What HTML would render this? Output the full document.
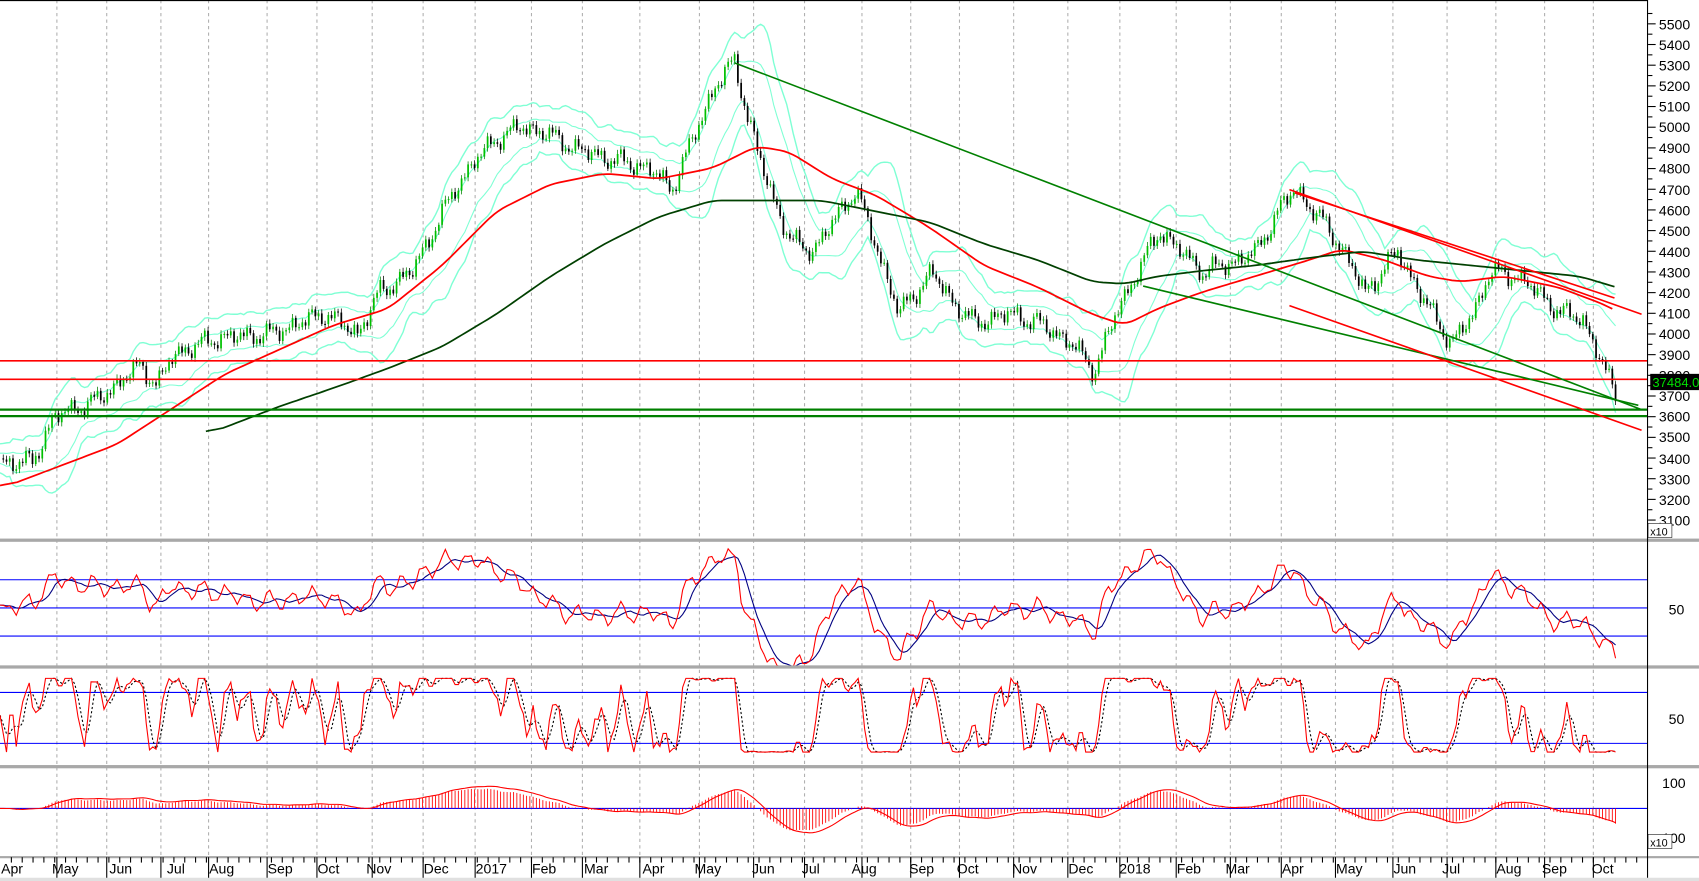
<!DOCTYPE html>
<html><head><meta charset="utf-8"><style>
html,body{margin:0;padding:0;background:#fff;overflow:hidden}
svg{display:block}
text{font-family:"Liberation Sans",Arial,sans-serif;font-size:13px;fill:#000}
</style></head><body>
<svg id="s" width="1699" height="881" viewBox="0 0 1568 813" preserveAspectRatio="none" xmlns="http://www.w3.org/2000/svg">
<rect width="1568" height="813" fill="#fff"/>
<g id="grid"></g>
<g id="plot"></g>
<rect x="0" y="497" width="1568" height="3" fill="#a8a8a8"/>
<rect x="0" y="614" width="1568" height="3" fill="#a8a8a8"/>
<rect x="0" y="706" width="1568" height="3" fill="#a8a8a8"/>
<rect x="0" y="790" width="1568" height="2" fill="#a8a8a8"/>
<rect x="0" y="810" width="1568" height="3" fill="#e0e0e0"/>
<line x1="1520.5" y1="0" x2="1520.5" y2="810" stroke="#000" stroke-width="1"/>
<line x1="0" y1="0.5" x2="1520" y2="0.5" stroke="#000"/>
<g id="ticks" stroke="#000"></g>
<g>
<text x="1531" y="27">5500</text><text x="1531" y="46">5400</text><text x="1531" y="65">5300</text><text x="1531" y="84">5200</text><text x="1531" y="103">5100</text><text x="1531" y="122">5000</text><text x="1531" y="141">4900</text><text x="1531" y="160">4800</text><text x="1531" y="180">4700</text><text x="1531" y="199">4600</text><text x="1531" y="218">4500</text><text x="1531" y="237">4400</text><text x="1531" y="256">4300</text><text x="1531" y="275">4200</text><text x="1531" y="294">4100</text><text x="1531" y="313">4000</text><text x="1531" y="332">3900</text><text x="1531" y="351">3800</text><text x="1531" y="370">3700</text><text x="1531" y="389">3600</text><text x="1531" y="408">3500</text><text x="1531" y="428">3400</text><text x="1531" y="447">3300</text><text x="1531" y="466">3200</text><text x="1531" y="485">3100</text>
<rect x="1523" y="345" width="45" height="15" fill="#000"/>
<text x="1525" y="357" style="fill:#00e000;font-size:12px">37484.0</text>
<rect x="1521" y="483" width="22" height="13" fill="#fff" stroke="#000" stroke-width="0.5"/>
<text x="1523" y="494" style="font-size:10px">x10</text>
<text x="1540" y="567">50</text>
<text x="1540" y="668">50</text>
<text x="1534" y="727">100</text>
<text x="1534" y="778">100</text>
<rect x="1521" y="770" width="22" height="13" fill="#fff" stroke="#000" stroke-width="0.5"/>
<text x="1523" y="781" style="font-size:10px">x10</text>
</g>
<g id="months"></g>
</svg>
<script>
var NS="http://www.w3.org/2000/svg";
function el(p,t,a){var e=document.createElementNS(NS,t);for(var k in a)e.setAttribute(k,a[k]);p.appendChild(e);return e;}
var grid=document.getElementById('grid'),plot=document.getElementById('plot'),ticks=document.getElementById('ticks');
var mx=[52,98,148,192,246,292,343,390,438,490,537,590,645,695,742,795,840,885,935,985,1033,1085,1135,1182,1232,1285,1335,1380,1425,1470];
mx.forEach(function(x){el(grid,'line',{x1:x+.5,y1:0,x2:x+.5,y2:790,stroke:'#b0b0b0','stroke-dasharray':'3,3'});});
for(var p=3100;p<=5550;p+=50){var y=22+(5500-p)*0.1908;el(ticks,'line',{x1:1521,y1:y,x2:p%100?1525:1528,y2:y});}
var ml=[[0,'Apr'],[47,'May'],[100,'Jun'],[153,'Jul'],[192,'Aug'],[246,'Sep'],[292,'Oct'],[337,'Nov'],[390,'Dec'],[438,'2017'],[490,'Feb'],[538,'Mar'],[592,'Apr'],[640,'May'],[693,'Jun'],[739,'Jul'],[785,'Aug'],[838,'Sep'],[882,'Oct'],[933,'Nov'],[985,'Dec'],[1032,'2018'],[1085,'Feb'],[1130,'Mar'],[1182,'Apr'],[1232,'May'],[1285,'Jun'],[1330,'Jul'],[1380,'Aug'],[1422,'Sep'],[1468,'Oct']];
var M=document.getElementById('months');
ml.forEach(function(m){var t=el(M,'text',{x:m[0]+1,y:806});t.textContent=m[1];});
mx.forEach(function(x){el(M,'line',{x1:x+.5,y1:791,x2:x+.5,y2:810,stroke:'#000'});});
for(var x=10;x<1520;x+=10)el(M,'line',{x1:x+.5,y1:791,x2:x+.5,y2:796,stroke:'#000'});
var K=[[0,3380],[30,3380],[50,3600],[90,3680],[130,3850],[145,3750],[160,3900],[200,3980],[250,4000],[300,4100],[330,4000],[350,4200],[380,4300],[400,4500],[420,4700],[440,4850],[460,4950],[480,5000],[500,4980],[530,4900],[560,4850],[600,4800],[620,4700],[640,4950],[660,5200],[678,5320],[690,5050],[710,4700],[730,4450],[750,4400],[770,4550],[790,4700],[810,4400],[830,4100],[860,4300],[880,4150],[900,4050],[930,4100],[960,4050],[990,3950],[1010,3820],[1030,4100],[1050,4300],[1070,4500],[1090,4400],[1110,4300],[1140,4350],[1160,4400],[1180,4600],[1195,4700],[1220,4550],[1240,4400],[1260,4200],[1290,4400],[1310,4200],[1340,3950],[1360,4100],[1375,4300],[1400,4280],[1420,4200],[1440,4100],[1460,4080],[1475,3900],[1485,3780],[1492,3700]];
function interpK(K,x){for(var i=1;i<K.length;i++)if(x<=K[i][0]){var a=K[i-1],b=K[i];return a[1]+(b[1]-a[1])*(x-a[0])/(b[0]-a[0]);}return K[K.length-1][1];}
var X=[],P=[];for(var x=0;x<=1492;x+=3){X.push(x);P.push(interpK(K,x)+30*Math.sin(x*0.31)+22*Math.sin(x*0.77+1)+14*Math.sin(x*1.9));}
function Y(p){return 22+(5500-p)*0.1908;}
function sma(a,n){return a.map(function(v,i){var s=0,c=0;for(var j=Math.max(0,i-n+1);j<=i;j++){s+=a[j];c++;}return s/c;});}
function sd(a,m,n){return a.map(function(v,i){var s=0,c=0;for(var j=Math.max(0,i-n+1);j<=i;j++){s+=(a[j]-m[i])*(a[j]-m[i]);c++;}return Math.sqrt(s/c);});}
function ema(a,n){var k=2/(n+1),o=[],e=a[0];a.forEach(function(v){e=v*k+e*(1-k);o.push(e);});return o;}
function line(xs,ys,col,w,extra,start){var d='';for(var i=start||0;i<xs.length;i++)d+=(d?'L':'M')+xs[i].toFixed(1)+','+ys[i].toFixed(1);var a={d:d,fill:'none',stroke:col,'stroke-width':w};for(var k in extra)a[k]=extra[k];return el(plot,'path',a);}
var m20=sma(P,12),s20=sd(P,m20,12);
line(X,m20.map(function(v,i){return Y(v+1.8*s20[i]+70);}),'#7fffd4',1.3);
line(X,m20.map(function(v,i){return Y(v-1.8*s20[i]-70);}),'#7fffd4',1.3);
line(X,m20.map(function(v,i){return Y(v+0.9*s20[i]+25);}),'#7fffd4',1);
line(X,m20.map(function(v,i){return Y(v-0.9*s20[i]-25);}),'#7fffd4',1);
for(var i=1;i<P.length;i++){var o=P[i-1],c=P[i],up=c>o;var hi=Math.max(o,c)+10+10*Math.abs(Math.sin(i)),lo=Math.min(o,c)-10-10*Math.abs(Math.cos(i));
el(plot,'line',{x1:X[i],y1:Y(hi),x2:X[i],y2:Y(lo),stroke:up?'#008000':'#000','stroke-width':0.7});
el(plot,'rect',{x:X[i]-0.8,y:Y(Math.max(o,c)),width:1.6,height:Math.max(1,Math.abs(Y(o)-Y(c))),fill:up?'#00c000':'#000'});}
var RK=[[0,448],[100,410],[200,345],[300,300],[350,285],[400,245],[450,195],[500,170],[550,160],[600,165],[650,155],[690,135],[720,140],[760,165],[800,180],[850,210],[900,245],[950,265],[1000,290],[1030,300],[1060,285],[1100,270],[1150,255],[1200,240],[1230,230],[1270,240],[1310,255],[1340,260],[1380,255],[1430,265],[1470,280],[1490,290]];
var GK=[[190,398],[250,375],[300,358],[350,340],[400,320],[450,290],[500,255],[550,225],[600,200],[650,185],[700,185],[750,185],[800,195],[850,205],[900,225],[950,240],[1000,260],[1030,262],[1060,255],[1100,250],[1150,245],[1200,238],[1250,232],[1300,240],[1350,245],[1400,250],[1450,255],[1490,267]];
function kpath(Kk,col){var xs=[],ys=[];for(var x=Kk[0][0];x<=Kk[Kk.length-1][0];x+=4){xs.push(x);ys.push(interpK(Kk,x));}ys=sma(ys,5);line(xs,ys,col,1.6);}
kpath(RK,'#ff0000');kpath(GK,'#004000');
function L(x1,y1,x2,y2,c,w){el(plot,'line',{x1:x1,y1:y1,x2:x2,y2:y2,stroke:c,'stroke-width':w||1.5});}
L(0,333,1520,333,'#ff0000');L(0,350,1520,350,'#ff0000');
L(0,378,1520,378,'#008000',2);L(0,384,1520,384,'#008000',2);
L(678,58,1515,378,'#008000');L(1055,264,1512,374,'#008000');
L(1190,282,1515,397,'#ff0000');L(1190,175,1515,290,'#ff0000');L(1195,178,1490,275,'#ff0000');
// RSI
var m40=sma(P,25);
var rsi=P.map(function(v,i){return Math.max(8,Math.min(92,52+(v-m40[i])*0.09+(P[i]-(P[i-2]||v))*0.08));});
rsi=sma(rsi,2);var rs=sma(rsi,6);
L(0,535,1520,535,'#0000ff',1);L(0,561,1520,561,'#0000ff',1);L(0,587,1520,587,'#0000ff',1);
line(X,rs.map(function(v){return 561-(v-50)*1.3;}),'#000080',1);
line(X,rsi.map(function(v){return 561-(v-50)*1.3;}),'#ff0000',1);
// Stoch
var st=P.map(function(v,i){var mn=1e9,mxv=-1e9;for(var j=Math.max(0,i-6);j<=i;j++){mn=Math.min(mn,P[j]);mxv=Math.max(mxv,P[j]);}return mxv>mn?(v-mn)/(mxv-mn)*100:50;});
st=sma(st,2);var sts=sma(st,3);
L(0,639,1520,639,'#0000ff',1);L(0,686,1520,686,'#0000ff',1);
line(X,sts.map(function(v){return 694-v*0.68;}),'#000',1,{'stroke-dasharray':'2,2'});
line(X,st.map(function(v){return 694-v*0.68;}),'#ff0000',1);
// MACD
var e12=ema(P,10),e26=ema(P,22),mac=e12.map(function(v,i){return v-e26[i];}),sig=ema(mac,6);
L(0,746,1520,746,'#0000ff',1);
for(var i=0;i<X.length;i++){el(plot,'line',{x1:X[i],y1:746,x2:X[i],y2:746-mac[i]*0.13,stroke:'#ff0000','stroke-width':0.8});}
line(X,sig.map(function(v){return 746-v*0.15;}),'#ff0000',1);
</script>
</body></html>
